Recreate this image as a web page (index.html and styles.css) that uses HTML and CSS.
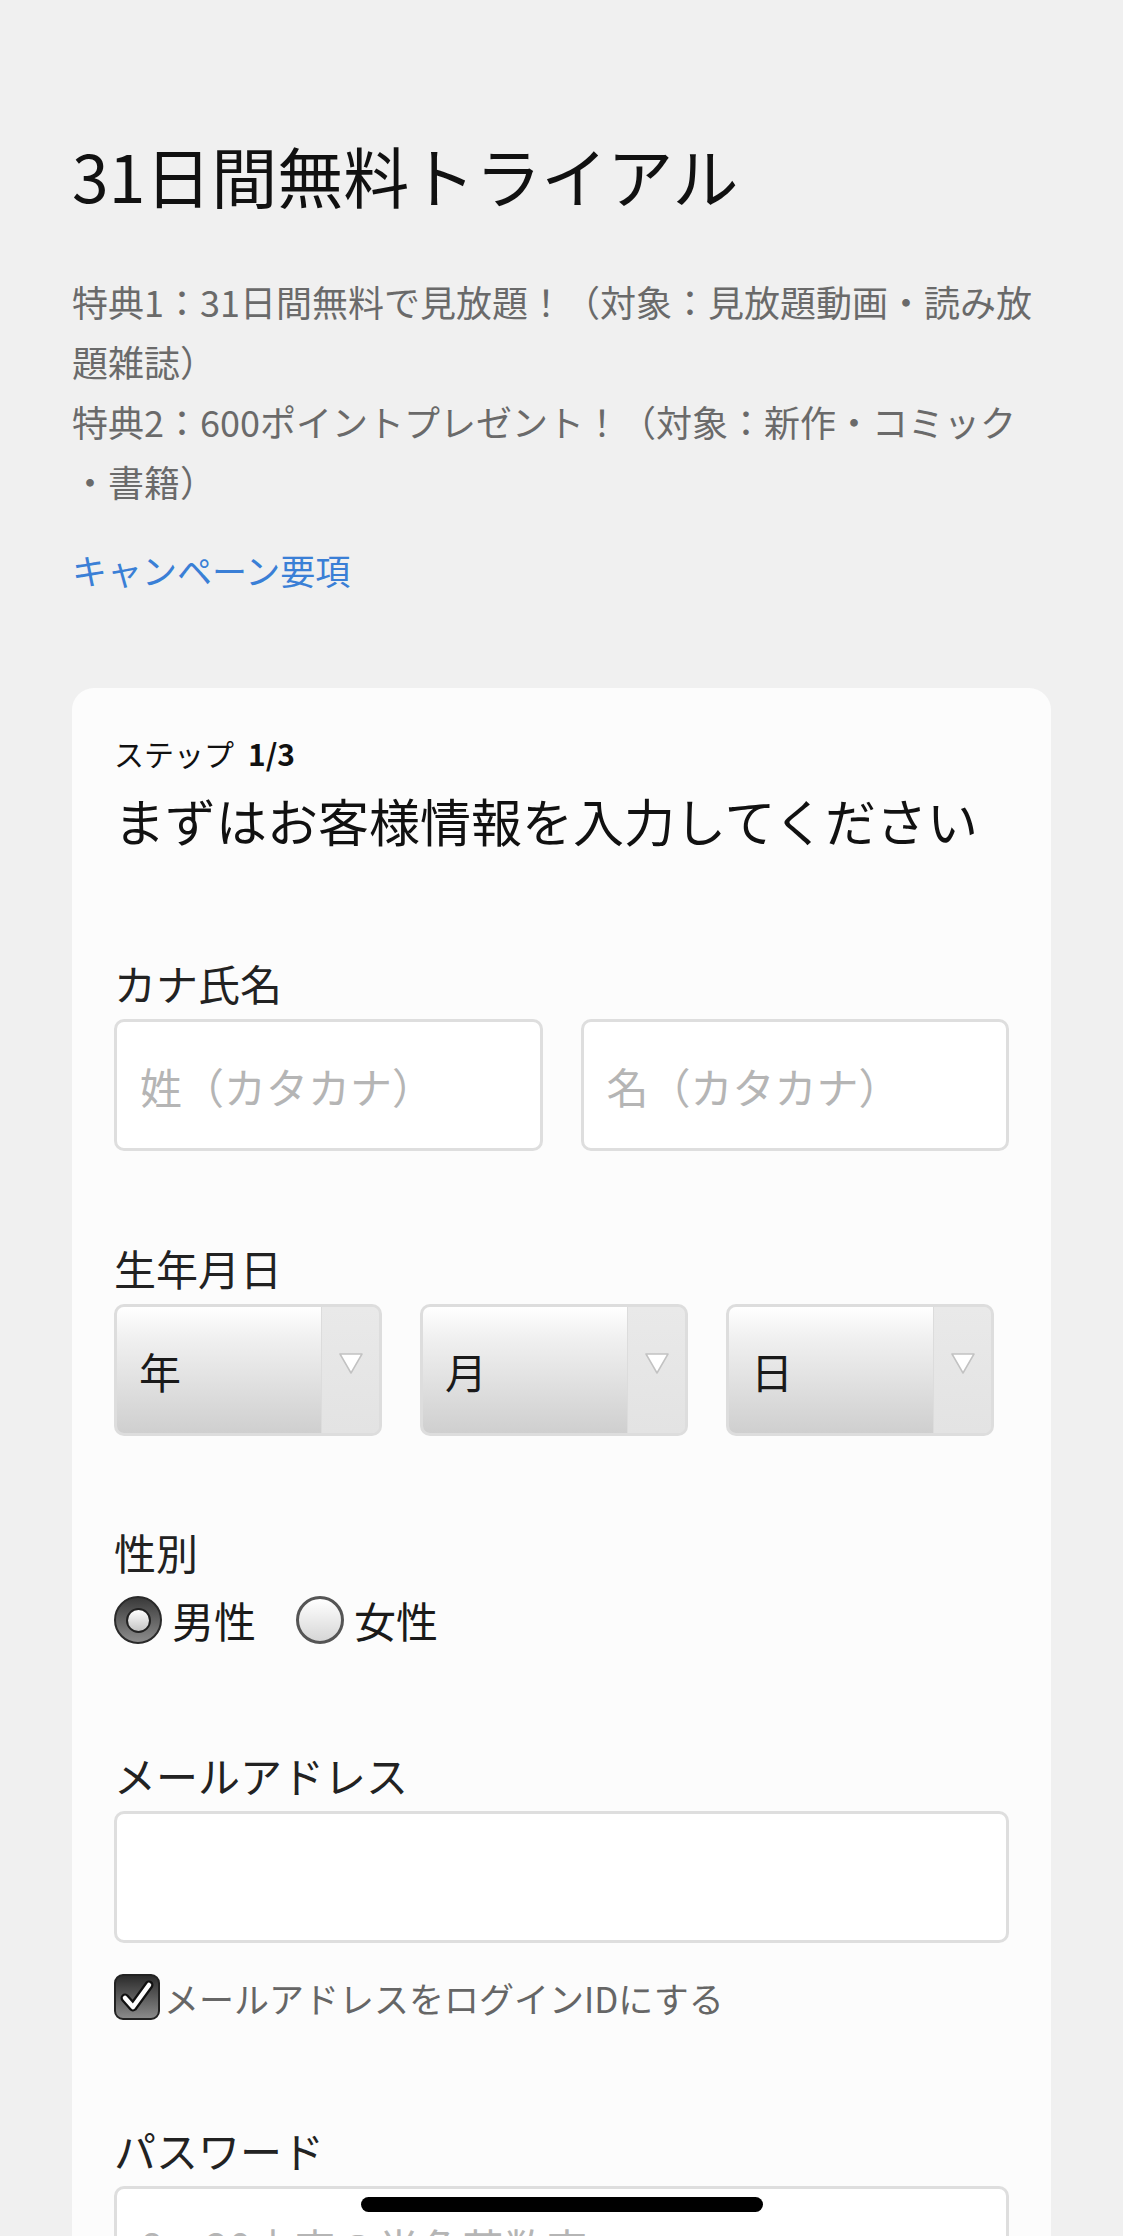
FILE: index.html
```html
<!DOCTYPE html>
<html lang="ja">
<head>
<meta charset="utf-8">
<title>31日間無料トライアル</title>
<link rel="stylesheet" href="styles.css">
</head>
<body>
<main class="page">
  <h1 class="title">31日間無料トライアル</h1>
  <p class="benefits">
    <span class="line">特典1：31日間無料で見放題！（対象：見放題動画・読み放</span>
    <span class="line">題雑誌）</span>
    <span class="line">特典2：600ポイントプレゼント！（対象：新作・コミック</span>
    <span class="line">・書籍）</span>
  </p>
  <a class="campaign-link" href="#">キャンペーン要項</a>

  <section class="card">
    <div class="step">ステップ<b class="step-num">1/3</b></div>
    <h2 class="card-heading">まずはお客様情報を入力してください</h2>

    <div class="field field-kana">
      <div class="label">カナ氏名</div>
      <div class="name-row">
        <input class="text-input" type="text" placeholder="姓（カタカナ）">
        <input class="text-input" type="text" placeholder="名（カタカナ）">
      </div>
    </div>

    <div class="field field-birth">
      <div class="label">生年月日</div>
      <div class="select-row">
        <div class="select"><span class="select-value">年</span><span class="select-arrow"><svg width="26" height="22" viewBox="0 0 26 22"><path d="M2 2 L24 2 L13 21 Z" fill="#fff" stroke="#c2c2c2" stroke-width="1.5" stroke-linejoin="round"/></svg></span></div>
        <div class="select"><span class="select-value">月</span><span class="select-arrow"><svg width="26" height="22" viewBox="0 0 26 22"><path d="M2 2 L24 2 L13 21 Z" fill="#fff" stroke="#c2c2c2" stroke-width="1.5" stroke-linejoin="round"/></svg></span></div>
        <div class="select"><span class="select-value">日</span><span class="select-arrow"><svg width="26" height="22" viewBox="0 0 26 22"><path d="M2 2 L24 2 L13 21 Z" fill="#fff" stroke="#c2c2c2" stroke-width="1.5" stroke-linejoin="round"/></svg></span></div>
      </div>
    </div>

    <div class="field field-gender">
      <div class="label">性別</div>
      <div class="radio-row">
        <span class="radio-item"><span class="radio radio-on"><span class="radio-dot"></span></span><span class="radio-text">男性</span></span>
        <span class="radio-item"><span class="radio"></span><span class="radio-text">女性</span></span>
      </div>
    </div>

    <div class="field field-mail">
      <div class="label">メールアドレス</div>
      <input class="text-input wide" type="email">
    </div>

    <div class="check-row">
      <span class="checkbox"><svg width="40" height="40" viewBox="0 0 40 40"><path d="M8 21 L16 30 L32 8" fill="none" stroke="#111" stroke-width="9" stroke-linecap="round" stroke-linejoin="round"/><path d="M8 21 L16 30 L32 8" fill="none" stroke="#fff" stroke-width="4.5" stroke-linecap="round" stroke-linejoin="round"/></svg></span>
      <span class="check-text">メールアドレスをログインIDにする</span>
    </div>

    <div class="field field-pass">
      <div class="label">パスワード</div>
      <input class="text-input wide pass" type="password" placeholder="8〜20文字の半角英数字">
    </div>
  </section>
</main>
<div class="home-indicator"></div>
</body>
</html>
```
FILE: styles.css
```css
html, body {
  margin: 0;
  padding: 0;
  height: 2236px;
  overflow: hidden;
  background: #f0f0f0;
}

body {
  font-family: "Noto Sans CJK JP", "Noto Sans", sans-serif;
  color: #222;
}

.page {
  padding: 128px 72px 0 72px;
}

.title {
  margin: 0;
  font-size: 66px;
  line-height: 92px;
  font-weight: 400;
  color: #111;
}

.benefits {
  margin: 51px 0 0 0;
  font-size: 36px;
  line-height: 60px;
  color: #6a6a6a;
}

.benefits .line {
  display: block;
  white-space: nowrap;
}

.campaign-link {
  display: block;
  margin-top: 29px;
  font-size: 35px;
  line-height: 60px;
  color: #3a7fd6;
  text-decoration: none;
}

.card {
  margin-top: 88px;
  background: #fcfcfc;
  border-radius: 22px;
  padding: 43px 42px 120px 42px;
}

.step {
  font-size: 30px;
  line-height: 45px;
  color: #111;
}

.step-num {
  margin-left: 14px;
  font-weight: 700;
}

.card-heading {
  margin: 8px 0 0 0;
  font-size: 51px;
  line-height: 72px;
  font-weight: 400;
  color: #111;
}

.label {
  font-size: 42px;
  line-height: 64px;
  margin-bottom: 4px;
  color: #222;
}

.field-kana { margin-top: 95px; }
.field-birth { margin-top: 85px; }
.field-gender { margin-top: 84px; }
.field-mail { margin-top: 91px; }
.field-pass { margin-top: 89px; }

.name-row {
  display: grid;
  grid-template-columns: 1fr 1fr;
  column-gap: 38px;
}

.text-input {
  display: block;
  box-sizing: border-box;
  width: 100%;
  height: 132px;
  margin: 0;
  padding: 0 0 0 23px;
  border: 3px solid #dedede;
  border-radius: 10px;
  background: #fff;
  font-family: inherit;
  font-size: 42px;
  color: #222;
  outline: none;
}

.text-input.pass {
  padding-bottom: 12px;
}

.text-input::placeholder {
  color: #b5b5b5;
}

.select-row {
  display: flex;
  gap: 38px;
}

.select {
  box-sizing: border-box;
  width: 268px;
  height: 132px;
  display: flex;
  border: 3px solid #dddddd;
  border-radius: 10px;
  overflow: hidden;
  background: #e6e6e6;
}

.select-value {
  flex: 1;
  display: flex;
  align-items: center;
  padding-left: 22px;
  font-size: 42px;
  color: #1a1a1a;
  background: linear-gradient(#ffffff 0%, #f0f0f0 25%, #dcdcdc 70%, #cfcfcf 100%);
}

.select-arrow {
  width: 58px;
  border-left: 1px solid #dcdcdc;
  display: flex;
  justify-content: center;
  align-items: flex-start;
  padding-top: 45px;
  box-sizing: border-box;
  background: linear-gradient(#e9e9e9, #e3e3e3);
}

.radio-row {
  display: flex;
  align-items: center;
  height: 64px;
  gap: 40px;
}

.radio-item {
  display: flex;
  align-items: center;
  gap: 10px;
}

.radio {
  box-sizing: border-box;
  width: 48px;
  height: 48px;
  border-radius: 50%;
  border: 3px solid #555;
  background: linear-gradient(#ffffff, #d6d6d6);
  display: flex;
  align-items: center;
  justify-content: center;
}

.radio-on {
  border: 2px solid #2a2a2a;
  background: linear-gradient(#3a3a3a, #8c8c8c);
}

.radio-dot {
  box-sizing: border-box;
  width: 25px;
  height: 25px;
  border-radius: 50%;
  border: 2px solid #222;
  background: linear-gradient(#ffffff, #c4c4c4);
}

.radio-text {
  font-size: 42px;
  line-height: 64px;
  color: #1a1a1a;
}

.check-row {
  margin-top: 22px;
  height: 64px;
  display: flex;
  align-items: center;
  gap: 4px;
}

.checkbox {
  box-sizing: border-box;
  width: 46px;
  height: 46px;
  border-radius: 9px;
  border: 2px solid #222;
  background: linear-gradient(#2c2c2c, #8a8a8a);
  display: flex;
  align-items: center;
  justify-content: center;
}

.check-text {
  font-size: 35px;
  color: #666;
}

.home-indicator {
  position: fixed;
  left: 50%;
  bottom: 24px;
  width: 402px;
  height: 15px;
  margin-left: -201px;
  border-radius: 8px;
  background: #000;
}
```
